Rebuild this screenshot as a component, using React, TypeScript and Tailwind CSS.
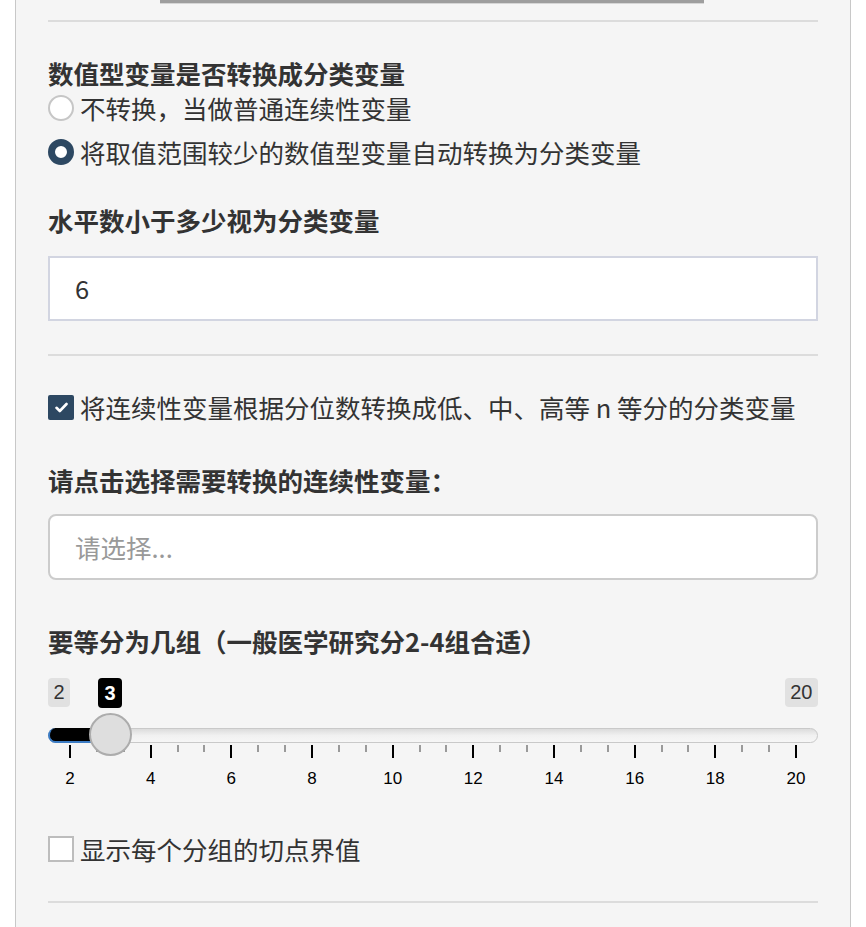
import React from 'react'

const CJK = { fontFamily: '"Noto Sans CJK SC", "Noto Sans", sans-serif' }

const TICKS = [2, 4, 6, 8, 10, 12, 14, 16, 18, 20]

function Radio({ checked, label }: { checked: boolean; label: string }) {
  return (
    <div className="flex items-center h-[40px]">
      {checked ? (
        <span className="w-[26px] h-[26px] rounded-full border-[7px] border-[#2d4862] bg-white shrink-0" />
      ) : (
        <span className="w-[26px] h-[26px] rounded-full border-2 border-[#c6c6c6] bg-white shrink-0" />
      )}
      <span className="ml-[6px] text-[25.5px] leading-[30px] text-[#333]">{label}</span>
    </div>
  )
}

function Checkbox({ checked, label, className }: { checked: boolean; label: string; className?: string }) {
  return (
    <div className={`flex items-center h-[30px] ${className ?? ''}`}>
      {checked ? (
        <span className="w-[26px] h-[25px] rounded-[2px] bg-[#2d4862] flex items-center justify-center shrink-0">
          <svg width="13" height="11" viewBox="0 0 13 11" fill="none">
            <path d="M1.5 5.8 L4.8 9 L11.5 2" stroke="white" strokeWidth="2.6" strokeLinecap="round" strokeLinejoin="round" />
          </svg>
        </span>
      ) : (
        <span className="w-[26px] h-[26px] border-2 border-[#bdbdbd] bg-white shrink-0" />
      )}
      <span className="ml-[6px] text-[25.5px] leading-[30px] text-[#333] whitespace-nowrap">{label}</span>
    </div>
  )
}

function Slider() {
  const start = 22
  const step = (748 - 22) / 9
  const minor: number[] = []
  for (let i = 0; i < 9; i++) {
    minor.push(start + step * i + step / 3, start + step * i + (step * 2) / 3)
  }

  return (
    <div className="relative mt-[22px] h-[112px]" style={{ fontFamily: '"Liberation Sans", Arial, sans-serif' }}>
      {/* min / max / current labels */}
      <div className="flex justify-between h-[29px]">
        <span className="px-[5.5px] h-[29px] leading-[29px] rounded-[4px] bg-[#e1e1e1] text-[#333] text-[20px]">2</span>
        <span className="px-[5.5px] h-[29px] leading-[29px] rounded-[4px] bg-[#e1e1e1] text-[#333] text-[20px]">20</span>
      </div>
      <span className="absolute left-[50px] top-0 w-[24px] h-[30px] leading-[30px] text-center rounded-[4px] bg-black text-white font-bold text-[20px]">
        3
      </span>

      {/* track */}
      <div className="absolute left-0 right-0 top-[50px] h-[15px] rounded-full border border-[#c9c9c9] bg-gradient-to-b from-[#dcdcdc] via-[#f1f1f1] to-[#f6f6f6]" />
      <div className="absolute left-0 top-[50px] w-[64px] h-[15px] rounded-l-full bg-black border-l-2 border-b-2 border-[#3c7cc4]" />

      {/* grid */}
      {minor.map((x, i) => (
        <span key={'m' + i} className="absolute top-[67px] w-[2px] h-[7px] bg-[#9a9a9a]" style={{ left: x - 1 }} />
      ))}
      {TICKS.map((t, i) => (
        <React.Fragment key={t}>
          <span className="absolute top-[67px] w-[2px] h-[13px] bg-black" style={{ left: start + step * i - 1 }} />
          <span
            className="absolute top-[89px] w-[40px] text-center text-[17px] leading-[24px] text-black"
            style={{ left: start + step * i - 20 }}
          >
            {t}
          </span>
        </React.Fragment>
      ))}

      {/* handle */}
      <div className="absolute left-[41px] top-[35px] w-[43px] h-[43px] rounded-full bg-[#dedede] border-2 border-[#acacac]" />
    </div>
  )
}

export default function App() {
  return (
    <div className="min-h-[927px] bg-white">
      <div className="ml-[15px] w-[836px] min-h-[927px] border-x border-[#c8c8c8] bg-[#f5f5f5] px-[32px]" style={CJK}>
        {/* bottom of previous button */}
        <div className="ml-[112px] w-[544px] h-[3px] bg-[#9e9e9e]" />
        <div className="ml-[112px] w-[544px] h-[1px] bg-[#d6d6d6]" />

        <div className="mt-[16px] h-[2px] bg-[#dcdcdc]" />

        <div className="mt-[36px] h-[30px] leading-[30px] text-[25.5px] font-bold text-[#333]">数值型变量是否转换成分类变量</div>
        <Radio checked={false} label="不转换，当做普通连续性变量" />
        <div className="mt-[4px]">
          <Radio checked label="将取值范围较少的数值型变量自动转换为分类变量" />
        </div>

        <div className="mt-[33px] h-[30px] leading-[30px] text-[25.5px] font-bold text-[#333]">水平数小于多少视为分类变量</div>
        <div className="mt-[21px] h-[65px] border-2 border-[#d2d5e1] bg-white flex items-center pl-[25px] text-[25.5px] text-[#333]">
          6
        </div>

        <div className="mt-[33px] h-[2px] bg-[#dcdcdc]" />

        <Checkbox checked label="将连续性变量根据分位数转换成低、中、高等 n 等分的分类变量" className="mt-[36px]" />

        <div className="mt-[43px] h-[30px] leading-[30px] text-[25.5px] font-bold text-[#333]">请点击选择需要转换的连续性变量：</div>
        <div className="mt-[19px] h-[66px] rounded-[8px] border-2 border-[#cccccc] bg-white flex items-center pl-[25px] text-[25.5px] text-[#999]">
          请选择...
        </div>

        <div className="mt-[46px] h-[30px] leading-[30px] text-[25.5px] font-bold text-[#333]">要等分为几组（一般医学研究分2-4组合适）</div>
        <Slider />

        <Checkbox checked={false} label="显示每个分组的切点界值" className="mt-[44px]" />

        <div className="mt-[37px] h-[2px] bg-[#dcdcdc]" />
      </div>
    </div>
  )
}
